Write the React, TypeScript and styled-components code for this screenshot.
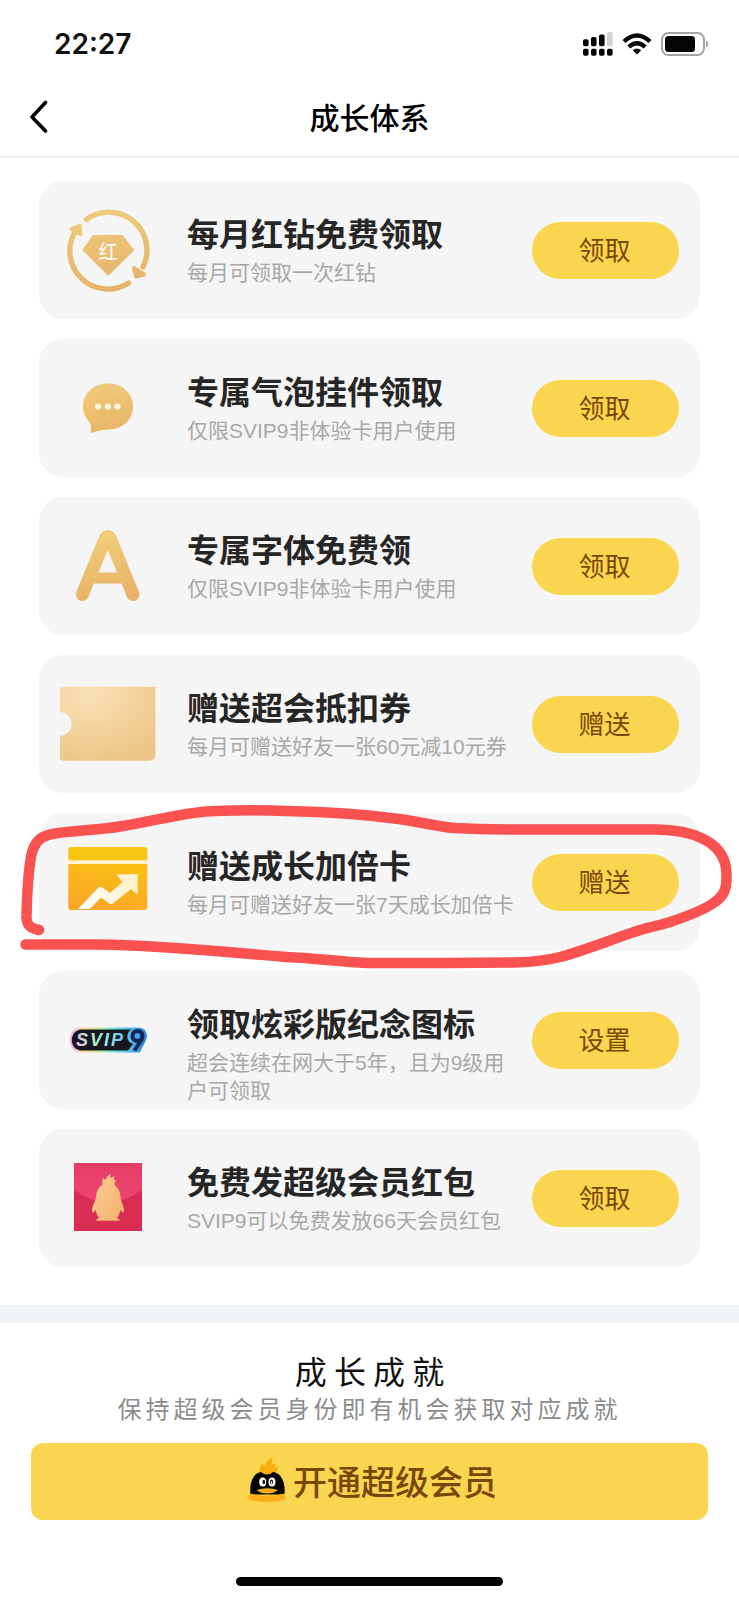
import React from "react";
import styled, { createGlobalStyle } from "styled-components";

const GlobalStyle = createGlobalStyle`
  * { box-sizing: border-box; }
  body {
    margin: 0;
    background: #fff;
    font-family: "Liberation Sans", "Noto Sans CJK SC", sans-serif;
  }
  h1, h2, h3, p, ul { margin: 0; padding: 0; }
  svg { display: block; flex: none; }
`;

const Page = styled.div`
  display: flex;
  flex-direction: column;
  min-height: 100vh;
  background: #fff;
  overflow-x: hidden;
`;

const StatusBar = styled.div`
  display: flex;
  align-items: center;
  justify-content: space-between;
  height: 88px;
  padding: 0 30px 0 54px;
`;

const Clock = styled.time`
  font: 600 28px/36px Inter, sans-serif;
  color: #111;
`;

const StatusIcons = styled.div`
  display: flex;
  align-items: center;
  gap: 9px;
`;

const NavBar = styled.header`
  display: grid;
  grid-template-columns: 60px 1fr 60px;
  align-items: center;
  height: 70px;
  padding-bottom: 12px;
  border-bottom: 2px solid #f1f1f2;
`;

const BackButton = styled.button`
  display: flex;
  align-items: center;
  height: 44px;
  padding: 0 0 0 28px;
  border: 0;
  background: none;
`;

const NavTitle = styled.h1`
  font: 500 30px/40px "Noto Sans CJK SC", sans-serif;
  text-align: center;
  color: #000;
`;

const Perks = styled.ul`
  display: flex;
  flex-direction: column;
  gap: 20px;
  padding: 23px 39px 38px;
  list-style: none;
`;

const Card = styled.li`
  position: relative;
  display: flex;
  align-items: center;
  min-height: 138px;
  padding: 0 21px 0 19px;
  border-radius: 24px;
  background: #f5f5f5;
`;

const CardText = styled.div`
  flex: 1;
  align-self: flex-start;
  display: flex;
  flex-direction: column;
  gap: 7px;
  min-width: 0;
  padding-top: 31px;
  margin: 0 14px 0 29px;
`;

const CardTitle = styled.h2`
  font: 600 32px/40px "Noto Sans CJK SC", sans-serif;
  color: #262626;
`;

const CardNote = styled.p`
  font-size: 21px;
  line-height: 28px;
  font-weight: 400;
  color: #a8a8a8;
`;

const PillButton = styled.button`
  flex: none;
  width: 147px;
  height: 57px;
  padding: 0 2px 2px 0;
  border: 0;
  border-radius: 29px;
  background: #fad54f;
  color: #7a4604;
  font: 400 26px/36px "Noto Sans CJK SC", sans-serif;
`;

const Marker = styled.svg`
  position: absolute;
  z-index: 1;
  top: -23px;
  left: -39px;
  width: calc(100% + 78px);
  height: 190px;
  pointer-events: none;
`;

const Band = styled.div`
  height: 18px;
  background: #f0f3f6;
`;

const Achievement = styled.section`
  display: flex;
  flex-direction: column;
  align-items: center;
  padding: 25px 31px 0;
`;

const AchievementTitle = styled.h2`
  font: 400 32px/44px "Noto Sans CJK SC", sans-serif;
  color: #111;
  white-space: pre;
`;

const AchievementNote = styled.p`
  font: 400 24px/32px "Noto Sans CJK SC", sans-serif;
  letter-spacing: 4px;
  color: #8c8c8c;
`;

const OpenButton = styled.button`
  display: flex;
  align-items: center;
  justify-content: center;
  gap: 7px;
  width: 100%;
  height: 77px;
  margin-top: 19px;
  padding: 0 0 2px 6px;
  border: 0;
  border-radius: 12px;
  background: #fad54f;
  color: #7a4604;
  font: 500 34px/44px "Noto Sans CJK SC", sans-serif;
`;

const HomeBar = styled.div`
  align-self: center;
  width: 36%;
  height: 9px;
  margin: 57px 0 14px;
  border-radius: 5px;
  background: #000;
`;

const Gold = ({ id }: { id: string }) => (
  <linearGradient id={id} gradientUnits="userSpaceOnUse" x1="38" y1="12" x2="52" y2="90">
    <stop offset="0" stopColor="#edcb7c" />
    <stop offset="1" stopColor="#e6b269" />
  </linearGradient>
);

const IconFrame = ({ children }: { children: React.ReactNode }) => (
  <svg width="100" height="100" viewBox="0 0 100 100" aria-hidden="true">
    {children}
  </svg>
);

const DiamondIcon = () => (
  <IconFrame>
    <defs><Gold id="gold-diamond" /></defs>
    <g fill="none" stroke="url(#gold-diamond)" strokeWidth="5.4" strokeLinecap="round">
      <path d="M28.500 19.500A38 38 0 0 1 85 67" />
      <path d="M70.500 83A38 38 0 0 1 17 32" />
    </g>
    <g fill="url(#gold-diamond)" stroke="url(#gold-diamond)" strokeWidth="4" strokeLinejoin="round">
      <path d="M13.500 29L21.500 26L22.500 34Z" />
      <path d="M76 68L86 74.500L78 76.500Z" />
    </g>
    <path
      d="M35.500 36H64L75 50L50.300 74.500L25.500 50Z"
      fill="url(#gold-diamond)" stroke="url(#gold-diamond)" strokeWidth="2" strokeLinejoin="round"
    />
    <text x="50" y="59" textAnchor="middle" fontSize="19" fontWeight="400" fill="#fff" fontFamily="'Noto Sans CJK SC', sans-serif">红</text>
  </IconFrame>
);

const BubbleIcon = () => (
  <IconFrame>
    <defs>
      <linearGradient id="gold-bubble" x1="0.3" y1="0" x2="0.6" y2="1">
        <stop offset="0" stopColor="#efcb78" />
        <stop offset="1" stopColor="#e8b566" />
      </linearGradient>
    </defs>
    <path
      d="M50 25.500C64.500 25.500 75 35.500 75 48.500C75 61.500 65 71 51 71.500C44 71.700 39.500 73 34.500 74.800C33 75.200 32.200 74.300 32.500 73C33 70 33.500 67.500 32 64.800C28 60.500 25 55.500 25 48.500C25 35.500 35.500 25.500 50 25.500Z"
      fill="url(#gold-bubble)"
    />
    <g fill="#fff8e8">
      <circle cx="40" cy="48.500" r="3.100" />
      <circle cx="49.800" cy="48.500" r="3.100" />
      <circle cx="59.500" cy="48.500" r="3.100" />
    </g>
  </IconFrame>
);

const FontIcon = () => (
  <IconFrame>
    <defs>
      <linearGradient id="gold-font" gradientUnits="userSpaceOnUse" x1="40" y1="14" x2="54" y2="86">
        <stop offset="0" stopColor="#f1ce7a" />
        <stop offset="1" stopColor="#e7b167" />
      </linearGradient>
    </defs>
    <g fill="none" stroke="url(#gold-font)" strokeLinecap="round" strokeLinejoin="round">
      <path d="M24.300 78.500L47.500 22Q49.700 19 52 22L75 78.500" strokeWidth="13" />
      <path d="M34 62H65" strokeWidth="11" strokeLinecap="butt" />
    </g>
  </IconFrame>
);

const TicketIcon = () => (
  <IconFrame>
    <defs>
      <radialGradient id="ticket" cx="0.3" cy="0.1" r="1">
        <stop offset="0" stopColor="#f9e2b5" />
        <stop offset="1" stopColor="#ecc485" />
      </radialGradient>
    </defs>
    <path
      d="M5 12.700H97.500V79.700Q97.500 86.700 90.500 86.700H5Q2 86.700 2 83.700V61.700A11.700 11.700 0 0 0 2 38.300V15.700Q2 12.700 5 12.700Z"
      fill="url(#ticket)"
    />
  </IconFrame>
);

const GrowthIcon = () => (
  <IconFrame>
    <defs>
      <linearGradient id="growth" x1="0" y1="1" x2="0.4" y2="0">
        <stop offset="0" stopColor="#f8a32c" />
        <stop offset="1" stopColor="#fabd15" />
      </linearGradient>
      <linearGradient id="growth-arrow" x1="0" y1="0" x2="1" y2="0">
        <stop offset="0" stopColor="#fff" />
        <stop offset="1" stopColor="#fdf0c8" />
      </linearGradient>
    </defs>
    <path d="M10.300 28.500V18Q10.300 15 13.300 15H86.300Q89.300 15 89.300 18V28.500Z" fill="#fac412" />
    <path d="M10.300 28.500H89.300V32H10.300Z" fill="#fff3cf" />
    <path d="M10.300 32H89.300V75Q89.300 78 86.300 78H13.300Q10.300 78 10.300 75Z" fill="url(#growth)" />
    <path
      d="M20 77L40.500 55.500Q42 54 44 55.200L52 61L64.500 50L58.500 42.500L79.700 42V62.500L73 57L55 71.500Q53.300 72.500 51.500 71.500L43 65.800L31.500 77Z"
      fill="url(#growth-arrow)"
    />
  </IconFrame>
);

const SvipIcon = () => (
  <IconFrame>
    <defs>
      <linearGradient id="rainbow" x1="0" y1="0" x2="1" y2="0">
        <stop offset="0" stopColor="#f3a9e6" />
        <stop offset="0.22" stopColor="#f2e48a" />
        <stop offset="0.45" stopColor="#9df0b4" />
        <stop offset="0.68" stopColor="#5fd5ea" />
        <stop offset="1" stopColor="#2f7fe0" />
      </linearGradient>
      <linearGradient id="rainbow-text" x1="0" y1="0" x2="1" y2="0">
        <stop offset="0" stopColor="#f4b9e4" />
        <stop offset="0.35" stopColor="#b9f0bf" />
        <stop offset="0.7" stopColor="#8fe3ef" />
        <stop offset="1" stopColor="#6ab8f5" />
      </linearGradient>
    </defs>
    <path d="M23 37.500H80C87.500 37.500 90.500 44 88 50L82 62.500H23C8 62.500 8 37.500 23 37.500Z" fill="url(#rainbow)" />
    <path d="M24 39.500H73Q68.500 43.500 69.500 48.500Q70.500 52.500 75 54L70 60.500H24C10.500 60.500 10.500 39.500 24 39.500Z" fill="#17171f" />
    <text x="18" y="56" fontFamily="'Liberation Sans', sans-serif" fontWeight="700" fontStyle="italic" fontSize="18" letterSpacing="2" fill="url(#rainbow-text)">SVIP</text>
    <g fill="none" stroke="#142554" strokeWidth="4">
      <circle cx="79.500" cy="46" r="5" />
      <path d="M84 49L76.500 60.500" />
    </g>
  </IconFrame>
);

const RedPacketIcon = () => (
  <IconFrame>
    <defs>
      <linearGradient id="flap" x1="0" y1="0" x2="0" y2="1">
        <stop offset="0" stopColor="#e53d66" />
        <stop offset="1" stopColor="#ee4670" />
      </linearGradient>
      <linearGradient id="packet-penguin" x1="0" y1="0" x2="1" y2="1">
        <stop offset="0" stopColor="#fbcf94" />
        <stop offset="1" stopColor="#f5af6f" />
      </linearGradient>
    </defs>
    <path d="M16 15H84V83H16Z" fill="#d92d54" />
    <path d="M16 15H84V42Q67 54 50 54Q33 54 16 42Z" fill="url(#flap)" />
    <path
      d="M44.500 36.500Q43.500 32.500 45 30L47.500 32Q48.500 28 52.500 26Q52 28.500 53 30L56.500 28Q55.500 30.500 56 32L58.500 32Q56 34 56.500 37Q62 41 62.500 49Q63 53 65 57.500Q66.500 61.500 65.800 64.500Q64 65 62 62Q62 67 58.500 70Q62 70.500 61.500 72.700H38.500Q38 70.500 41.500 70Q38 67 38 62Q36 65 34.200 64.500Q33.500 61.500 35 57.500Q37.500 53 38 49Q38.500 40.500 44.500 36.500Z"
      fill="url(#packet-penguin)"
    />
  </IconFrame>
);

const PenguinIcon = () => (
  <svg width="38" height="50" viewBox="2 0 38 50" aria-hidden="true">
    <path d="M14.500 19C12.500 14 14 9.500 17 7.500Q17.500 10 19 10.500Q20 4 26.500 1.500Q25 5.500 26.500 8.500Q28 8 29 6.500Q29.500 9.500 28.500 11.500Q31 11.500 32.500 10.500Q31.500 14 29 19Z" fill="#fcae0f" />
    <path d="M4.500 38.500C3 25 8.500 16.500 15 16Q18 18.500 21 18.500Q24.500 18.500 27 16C34 16.500 40 25 38.500 38.500Z" fill="#070707" />
    <path d="M4 37.500Q21.500 42 38.500 37.500L40 43.500Q21.500 48.500 2 43.500Z" fill="#fbb019" />
    <ellipse cx="16.700" cy="26" rx="3.500" ry="4.600" fill="#fff" />
    <ellipse cx="26" cy="26" rx="3.500" ry="4.600" fill="#fff" />
    <ellipse cx="17.800" cy="26" rx="1.300" ry="2.200" fill="#111" />
    <ellipse cx="25.500" cy="26" rx="1.600" ry="2.400" fill="#111" />
    <ellipse cx="25.500" cy="26.500" rx="0.700" ry="1.500" fill="#fff" />
    <path d="M10.500 34Q21.300 30.500 32 34Q28 37.500 21.300 37.500Q14.500 37.500 10.500 34Z" fill="#f5a91c" />
  </svg>
);

const SignalIcon = () => (
  <svg width="30" height="24" viewBox="0 0 30 24" aria-hidden="true">
    <g fill="#050505">
      <rect x="0" y="16.700" width="5.600" height="7" rx="1.800" />
      <rect x="8" y="16.700" width="5.600" height="7" rx="1.800" />
      <rect x="16" y="16.700" width="5.600" height="7" rx="1.800" />
      <rect x="24" y="16.700" width="5.600" height="7" rx="1.800" />
      <rect x="0" y="7.200" width="5.600" height="7" rx="1.800" />
      <rect x="8" y="5" width="5.600" height="9.200" rx="1.800" />
      <rect x="16" y="2.500" width="5.600" height="11.700" rx="1.800" />
    </g>
    <rect x="24" y="0" width="5.600" height="14.200" rx="1.800" fill="#d2d2d2" />
  </svg>
);

const WifiIcon = () => (
  <svg width="30" height="22" viewBox="0 0 30 22" aria-hidden="true">
    <g fill="none" stroke="#050505" strokeWidth="4.400">
      <path d="M2 8.500Q15 -3.500 28 8.500" />
      <path d="M6.800 14Q15 6.500 23.200 14" />
    </g>
    <path d="M15 21.500L10.800 17.200Q15 13.600 19.200 17.200Z" fill="#050505" />
  </svg>
);

const BatteryIcon = () => (
  <svg width="48" height="24" viewBox="0 0 48 24" aria-hidden="true">
    <rect x="1" y="1" width="42" height="22" rx="6.500" fill="none" stroke="#a5a5a5" strokeWidth="2" />
    <rect x="4" y="4" width="30" height="16" rx="3.500" fill="#050505" />
    <path d="M45 8.500Q47.500 9.500 47.500 12Q47.500 14.500 45 15.500Z" fill="#a5a5a5" />
  </svg>
);

const perks = [
  { Icon: DiamondIcon, title: "每月红钻免费领取", note: "每月可领取一次红钻", action: "领取" },
  { Icon: BubbleIcon, title: "专属气泡挂件领取", note: "仅限SVIP9非体验卡用户使用", action: "领取" },
  { Icon: FontIcon, title: "专属字体免费领", note: "仅限SVIP9非体验卡用户使用", action: "领取" },
  { Icon: TicketIcon, title: "赠送超会抵扣券", note: "每月可赠送好友一张60元减10元券", action: "赠送" },
  { Icon: GrowthIcon, title: "赠送成长加倍卡", note: "每月可赠送好友一张7天成长加倍卡", action: "赠送", marked: true },
  { Icon: SvipIcon, title: "领取炫彩版纪念图标", note: "超会连续在网大于5年，且为9级用户可领取", action: "设置" },
  { Icon: RedPacketIcon, title: "免费发超级会员红包", note: "SVIP9可以免费发放66天会员红包", action: "领取" },
];

export default function App() {
  return (
    <Page>
      <GlobalStyle />
      <StatusBar>
        <Clock>22:27</Clock>
        <StatusIcons>
          <SignalIcon />
          <WifiIcon />
          <BatteryIcon />
        </StatusIcons>
      </StatusBar>
      <NavBar>
        <BackButton aria-label="返回">
          <svg width="22" height="34" viewBox="0 0 22 34" aria-hidden="true">
            <path d="M17.500 3.500L4 18L17.500 32" fill="none" stroke="#000" strokeWidth="3.600" strokeLinecap="round" strokeLinejoin="round" />
          </svg>
        </BackButton>
        <NavTitle>成长体系</NavTitle>
      </NavBar>
      <main>
        <Perks>
          {perks.map(({ Icon, title, note, action, marked }) => (
            <Card key={title}>
              <Icon />
              <CardText>
                <CardTitle>{title}</CardTitle>
                <CardNote>{note}</CardNote>
              </CardText>
              <PillButton>{action}</PillButton>
              {marked && (
                <Marker viewBox="0 790 739 190" aria-hidden="true">
                  <path
                    d="M39 930C29 928 26 924 26.500 915C27 895 28 875 31 857C34 840 42 835 58 833C80 830 100 830 123 826C155 821 190 811 215 811C240 810 265 810 287 811C325 812 360 814 390 818C415 820 430 826 455 828C490 830 530 829.500 560 829.500H657C690 830 722 840 726 868C728 888 725 896 712 904C700 912 685 917 670 922C658 926 645 928 637 931C610 940 580 952 560 957C545 961 530 962 515 962.500C470 963 410 963 367 963C340 962 315 958 287 957C225 952 160 945 100 944.500H25.500"
                    fill="none" stroke="#fa5151" strokeWidth="10.500" strokeLinecap="round" strokeLinejoin="round"
                  />
                </Marker>
              )}
            </Card>
          ))}
        </Perks>
        <Band />
        <Achievement>
          <AchievementTitle>成 长 成 就</AchievementTitle>
          <AchievementNote>保持超级会员身份即有机会获取对应成就</AchievementNote>
          <OpenButton>
            <PenguinIcon />
            开通超级会员
          </OpenButton>
        </Achievement>
      </main>
      <HomeBar />
    </Page>
  );
}
